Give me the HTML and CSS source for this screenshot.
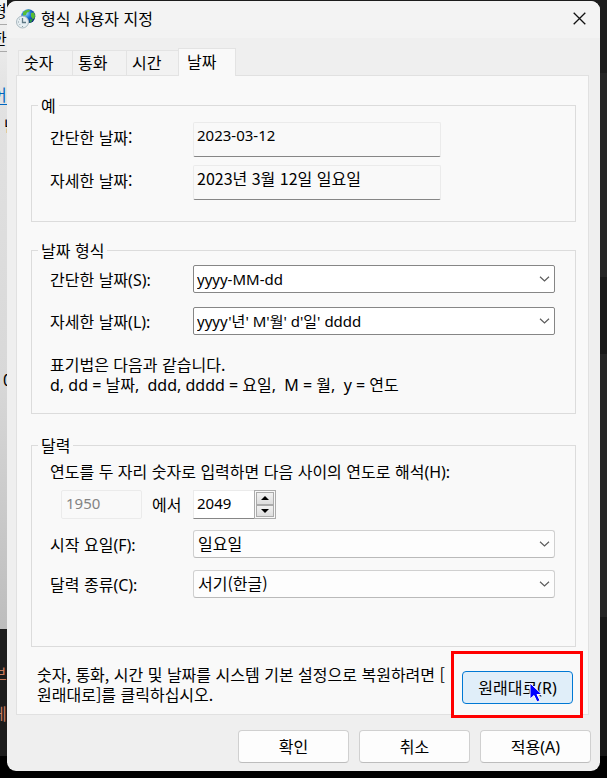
FILE: index.html
```html
<!DOCTYPE html>
<html lang="ko">
<head>
<meta charset="utf-8">
<meta name="viewport" content="width=device-width, initial-scale=1">
<title>형식 사용자 지정</title>
<link rel="stylesheet" href="styles.css">
</head>
<body>
<div class="desktop">
  <div class="backdrop" aria-hidden="true">
    <div class="behind behind-light">
      <span class="scrap">형</span>
      <span class="scrap ruled">한</span>
      <span class="scrap scrap-link">어</span>
      <span class="scrap scrap-edge">난</span>
      <span class="scrap scrap-low">0</span>
    </div>
    <div class="behind behind-dark">
      <span class="scrap">브</span>
      <span class="scrap">게</span>
    </div>
    <div class="behind-right"></div>
  </div>

  <main class="dialog">
    <header class="titlebar">
      <svg class="app-icon" viewBox="0 0 20 20" width="20" height="20" aria-hidden="true">
        <defs>
          <radialGradient id="sea" cx="35%" cy="30%" r="75%">
            <stop offset="0" stop-color="#8fdcff"/><stop offset=".45" stop-color="#1c6fd0"/><stop offset="1" stop-color="#071c78"/>
          </radialGradient>
        </defs>
        <circle cx="12.3" cy="7.3" r="7" fill="url(#sea)"/>
        <path d="M7 3.5C9 1 12 .4 14 1l-1 2-2 .5-1 2.5-3 .5zM15 4l3-.5 1 3-.5 3-2 .5-1.500-2.500z" fill="#57bd35"/>
        <path d="M14 10l3 .5-2 3-1.500.5z" fill="#2e9a43"/>
        <circle cx="6.500" cy="13" r="6" fill="#e6eef2" stroke="#a9b8bf"/>
        <path d="M6.500 9v4.500H10" fill="none" stroke="#5f7986" stroke-width="1.300"/>
        <path d="M6.500 17v1M2 13h1M3.300 16l.7-.7M3.300 10l.7.7" stroke="#8a9ba3"/>
      </svg>
      <h1>형식 사용자 지정</h1>
      <button class="close" type="button" aria-label="닫기">
        <svg viewBox="0 0 13 13" width="13" height="13" aria-hidden="true"><path d="M.7.7l11.600 11.600M12.300.7L.7 12.300" stroke="#111" stroke-width="1.300"/></svg>
      </button>
    </header>

    <div class="tabs" role="tablist">
      <button type="button" role="tab" aria-selected="false">숫자</button>
      <button type="button" role="tab" aria-selected="false">통화</button>
      <button type="button" role="tab" aria-selected="false">시간</button>
      <button type="button" role="tab" aria-selected="true">날짜</button>
    </div>

    <form class="panel">
      <fieldset class="example">
        <legend>예</legend>
        <div class="row">
          <label for="ex-short">간단한 날짜:</label>
          <input class="sample value" id="ex-short" value="2023-03-12" readonly>
        </div>
        <div class="row">
          <label for="ex-long">자세한 날짜:</label>
          <input class="sample" id="ex-long" value="2023년 3월 12일 일요일" readonly>
        </div>
      </fieldset>

      <fieldset class="formats">
        <legend>날짜 형식</legend>
        <div class="row">
          <label for="short">간단한 날짜<span class="latin">(S):</span></label>
          <div class="combo editable value">
            <select id="short"><option>yyyy-MM-dd</option></select>
            <svg viewBox="0 0 11 6" width="11" height="6" aria-hidden="true"><path d="M1 .8l4.500 4.200L10 .8"/></svg>
          </div>
        </div>
        <div class="row">
          <label for="long">자세한 날짜<span class="latin">(L):</span></label>
          <div class="combo editable value">
            <select id="long"><option>yyyy'년' M'월' d'일' dddd</option></select>
            <svg viewBox="0 0 11 6" width="11" height="6" aria-hidden="true"><path d="M1 .8l4.500 4.200L10 .8"/></svg>
          </div>
        </div>
        <p class="notation">표기법은 다음과 같습니다.<br><span class="latin">d, dd = 날짜,&nbsp; ddd, dddd = 요일,&nbsp; M = 월,&nbsp; y = 연도</span></p>
      </fieldset>

      <fieldset class="calendar">
        <legend>달력</legend>
        <label class="range-label" for="year-to">연도를 두 자리 숫자로 입력하면 다음 사이의 연도로 해석<span class="latin">(H):</span></label>
        <div class="years">
          <input class="year-from value" value="1950" aria-label="시작 연도" disabled>
          <span class="between">에서</span>
          <div class="spinner">
            <input class="value" id="year-to" value="2049">
            <div class="steps">
              <button type="button" aria-label="늘리기"><svg viewBox="0 0 8 4" width="8" height="4"><path d="M0 4l4-4 4 4z"/></svg></button>
              <button type="button" aria-label="줄이기"><svg viewBox="0 0 8 4" width="8" height="4"><path d="M0 0l4 4 4-4z"/></svg></button>
            </div>
          </div>
        </div>
        <div class="row">
          <label for="first-day">시작 요일<span class="latin">(F):</span></label>
          <div class="combo">
            <select id="first-day"><option>일요일</option></select>
            <svg viewBox="0 0 11 6" width="11" height="6" aria-hidden="true"><path d="M1 .8l4.500 4.200L10 .8"/></svg>
          </div>
        </div>
        <div class="row">
          <label for="kind">달력 종류<span class="latin">(C):</span></label>
          <div class="combo">
            <select id="kind"><option>서기(한글)</option></select>
            <svg viewBox="0 0 11 6" width="11" height="6" aria-hidden="true"><path d="M1 .8l4.500 4.200L10 .8"/></svg>
          </div>
        </div>
      </fieldset>

      <div class="restore">
        <p>숫자, 통화, 시간 및 날짜를 시스템 기본 설정으로 복원하려면 [<br>원래대로]를 클릭하십시오.</p>
        <div class="reset">
          <button type="button">원래대로<span class="latin">(R)</span></button>
          <svg class="pointer" viewBox="0 0 14 21" width="14" height="21" aria-hidden="true"><path d="M1 1v16l4-3.500 3 6.500 3-1.500-3-6h5z" fill="#00f" stroke="#fff"/></svg>
        </div>
      </div>
    </form>

    <footer class="actions">
      <button type="button">확인</button>
      <button type="button">취소</button>
      <button type="button">적용<span class="latin">(A)</span></button>
    </footer>
  </main>
</div>
</body>
</html>
```
FILE: styles.css
```css
* { box-sizing: border-box; }

body {
  margin: 0;
  background: #000;
  color: #000;
  font: 16px/20px "Noto Sans CJK KR", sans-serif;
}

button, input, select { font: inherit; color: inherit; margin: 0; }
h1, p { margin: 0; font-size: inherit; font-weight: 400; }
.latin, .value { font-family: "Noto Sans", "Noto Sans CJK KR", sans-serif; }
.latin { line-height: 1; }
.value { font-size: 15px; }

.desktop {
  position: relative;
  min-height: 100vh;
  padding: 1px 7px 7px;
}

/* Windows that show around the dialog's edges */
.backdrop {
  position: absolute;
  inset: 0 0 22px;
  display: grid;
  grid-template: 629px 1fr / 7px 1fr;
  background: #202020;
}
.behind { overflow: hidden; display: flex; flex-direction: column; }
.behind-light {
  background: linear-gradient(#f3f3f3 0, #e2e2e2 15%, #d8d8d8 60%, #bdbdbd);
}
.behind-dark { grid-row: 2; background: #1c1c1c; color: #c87b5c; padding-top: 34px; gap: 20px; }
.behind-right {
  grid-column: 2;
  grid-row: 1 / 3;
  background: linear-gradient(#1c1c1c 73px, #252525 73px, #252525 277px, #191919 277px, #191919 354px, #252525 354px, #252525 617px, #181818 617px);
}
.scrap { display: block; width: 16px; margin-left: -8px; }
.behind-light .ruled { border: solid #aaa; border-width: 1px 0; padding: 3px 0; margin-top: 4px; }
.behind-light .scrap-link { color: #0067c0; margin-top: 32px; border-bottom: 1px solid #0067c0; }
.behind-light .scrap-edge { margin: 10px 0 0 4px; }
.behind-light .scrap-low { margin: 234px 0 0 3px; }

.dialog {
  position: relative;
  overflow: hidden;
  border-radius: 9px;
  background: #efefef;
  padding-bottom: 8px;
}

.titlebar {
  display: flex;
  align-items: center;
  height: 37px;
  padding: 0 14px 2px 9px;
  background: #f3f3f3;
}
.titlebar h1 { flex: 1; margin: -2px 0 0 5px; }
.close { display: flex; padding: 0; border: 0; background: none; }

.tabs { display: flex; align-items: flex-end; margin: 10px 0 -1px 11px; position: relative; }
.tabs button {
  width: 54px;
  height: 26px;
  padding: 0 5px 2px;
  border: 1px solid #e3e3e3;
  border-right: 0;
  background: #f2f2f2;
  text-align: left;
}
.tabs button[aria-selected="true"] {
  width: 58px;
  height: 28px;
  margin-left: -2px;
  padding: 0 8px 4px;
  border-right: 1px solid #e3e3e3;
  border-bottom: 0;
  background: #f9f9f9;
}

.panel {
  margin: 0 11px 0 9px;
  padding: 19px 12px 10px 14px;
  border: 1px solid #e1e1e1;
  background: #f9f9f9;
}

fieldset {
  display: flex;
  flex-direction: column;
  min-width: 0;
  margin: 0;
  border: 1px solid #dcdcdc;
  padding: 0 20px 0 18px;
}
legend { margin-left: -12px; padding: 0 3px; line-height: 20px; }
.example { padding-top: 7px; padding-bottom: 21px; gap: 8px; }
.formats { margin-top: 18px; padding-top: 5px; padding-bottom: 18px; gap: 14px; }
.calendar { margin-top: 21px; padding-top: 6px; padding-bottom: 48px; gap: 12px; }

.row { display: grid; grid-template-columns: 143px 1fr; align-items: center; }
.example label { padding-bottom: 6px; }

.sample {
  width: 70%;
  max-width: 248px;
  height: 35px;
  padding: 0 3px 10px;
  border: 1px solid #ebebeb;
  border-bottom-color: #868686;
  border-radius: 2px;
  background: #f9f9f9;
}

.combo { display: flex; align-items: center; position: relative; }
.combo select {
  appearance: none;
  width: 100%;
  height: 28px;
  padding: 0 24px 2px 4px;
  border: 1px solid #d0d0d0;
  border-bottom-color: #bababa;
  border-radius: 3px;
  background: #fdfdfd;
}
.combo.editable select { padding: 0 24px 0 3px; border-color: #868686; border-radius: 2px; background: #fff; }
.combo svg { position: absolute; right: 5px; pointer-events: none; fill: none; stroke: #5c5c5c; stroke-width: 1.2; }

.notation { margin-top: 5px; padding-bottom: 1px; }

.years { display: flex; align-items: stretch; height: 29px; margin: -3px 0 -1px 11px; }
.year-from {
  width: 81px;
  padding: 0 4px 3px;
  border: 1px solid #ebebeb;
  border-radius: 2px;
  background: #f9f9f9;
  color: #838383;
}
.between { width: 51px; padding-left: 10px; line-height: 28px; }
.spinner { display: flex; }
.spinner input {
  width: 61px;
  padding: 0 3px 3px;
  border: 1px solid #ebebeb;
  border-right: 0;
  border-bottom-color: #868686;
  background: #fff;
}
.steps { display: grid; width: 22px; padding: 1px; border: 1px solid #ababab; background: #f9f9f9; }
.steps button {
  display: flex;
  align-items: center;
  justify-content: center;
  min-height: 0;
  padding: 0;
  border: 1px solid #ababab;
  background: linear-gradient(#f1f1f1, #dedede);
}

.restore { display: flex; justify-content: space-between; margin-top: 17px; padding-left: 6px; }
.restore p { flex: 1; min-width: 0; white-space: nowrap; }
.reset { position: relative; margin: 7px 3px 0 0; }

.reset button, .actions button {
  width: 111px;
  height: 33px;
  padding: 0 0 2px;
  border: 1px solid #d0d0d0;
  border-bottom-color: #bdbdbd;
  border-radius: 4px;
  background: #fdfdfd;
}
.reset button { position: relative; border-color: #0078d4; background: #e0eef9; }
/* Highlight frame around the reset button */
.reset::before {
  content: "";
  position: absolute;
  inset: -20px -10px -14px -11px;
  border: 3px solid #f00;
  background: #f9f9f9;
}
.pointer { position: absolute; left: 67px; top: 11px; }

.actions { display: flex; justify-content: flex-end; gap: 10px; padding: 15px 9px 0; }
```
